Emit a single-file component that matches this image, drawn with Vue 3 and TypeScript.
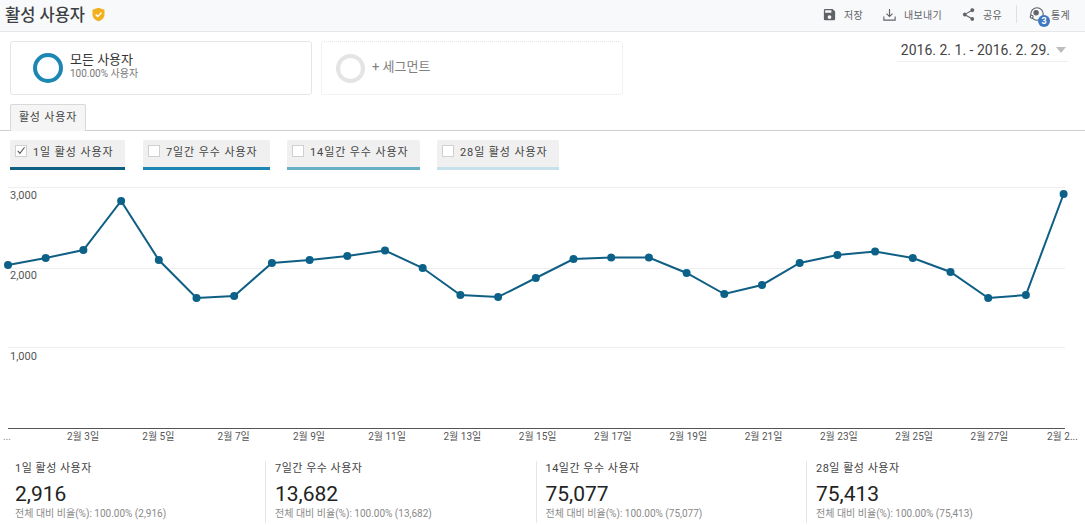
<script setup lang="ts">
const values: number[] = [265,258,250,201,260,298,296,263,260,256,250.5,268,295,297,278,259,257.5,257.5,273,294,285,263,255,251.5,258,272,298,295,194]
const points = values.map((y, i) => ({ x: 8 + i * 37.7, y: y - 187 }))
const line = points.map(p => `${p.x},${p.y}`).join(' ')
const legends = [
  { label: '1일 활성 사용자', color: '#0f5f85', checked: true, cls: 'l1' },
  { label: '7일간 우수 사용자', color: '#1c86b4', checked: false, cls: 'l2' },
  { label: '14일간 우수 사용자', color: '#68b0c8', checked: false, cls: 'l3' },
  { label: '28일 활성 사용자', color: '#c6e0ec', checked: false, cls: 'l4' },
]
const ticks = ['2월 3일','2월 5일','2월 7일','2월 9일','2월 11일','2월 13일','2월 15일','2월 17일','2월 19일','2월 21일','2월 23일','2월 25일','2월 27일']
const stats = [
  { label: '1일 활성 사용자', value: '2,916', sub: '전체 대비 비율(%): 100.00% (2,916)' },
  { label: '7일간 우수 사용자', value: '13,682', sub: '전체 대비 비율(%): 100.00% (13,682)' },
  { label: '14일간 우수 사용자', value: '75,077', sub: '전체 대비 비율(%): 100.00% (75,077)' },
  { label: '28일 활성 사용자', value: '75,413', sub: '전체 대비 비율(%): 100.00% (75,413)' },
]
</script>

<template>
  <div class="page">
    <header class="top">
      <div class="title">
        <h1>활성 사용자</h1>
        <svg class="shield" viewBox="0 0 16 16" width="15" height="15">
          <path d="M8 .8 14.4 3v4.6c0 3.8-2.7 6.3-6.4 7.6C4.300 13.900 1.600 11.400 1.600 7.600V3z" fill="#f2b01e" />
          <path d="M5 8l2.200 2.200L11.200 6" fill="none" stroke="#fff" stroke-width="1.500" />
        </svg>
      </div>
      <nav class="actions">
        <span class="act save">
          <svg viewBox="0 0 24 24" width="15" height="15"><path fill="#5f6368" d="M17 3H5a2 2 0 0 0-2 2v14a2 2 0 0 0 2 2h14a2 2 0 0 0 2-2V7zm-5 16a3 3 0 1 1 0-6 3 3 0 0 1 0 6zm3-10H5V5h10z" /></svg>
          저장
        </span>
        <span class="act exp">
          <svg viewBox="0 0 16 16" width="15" height="15" fill="none" stroke="#5f6368" stroke-width="1.200"><path d="M8 2v8M4.800 7 8 10.200 11.200 7M2 10v4h12v-4" /></svg>
          내보내기
        </span>
        <span class="act share">
          <svg viewBox="0 0 24 24" width="15" height="15"><path fill="#5f6368" d="M18 16a3 3 0 0 0-2 .8L8.900 12.700a3 3 0 0 0 0-1.400L16 7.200A3 3 0 1 0 15 5c0 .2 0 .5.100.7L8 9.800a3 3 0 1 0 0 4.400l7.100 4.100-.1.700a3 3 0 1 0 3-3z" /></svg>
          공유
        </span>
        <span class="sep"></span>
        <span class="act stat">
          <span class="insight">
            <svg viewBox="0 0 18 18" width="16" height="16" fill="none" stroke="#5f6368" stroke-width="1.300"><circle cx="9" cy="9" r="7" /><circle cx="8" cy="7.500" r="2.400" fill="#5f6368" /><circle cx="3" cy="12" r="1.600" fill="#fff" /></svg>
            <span class="badge">3</span>
          </span>
          통계
        </span>
      </nav>
    </header>

    <section class="segments">
      <div class="seg solid">
        <span class="ring blue"></span>
        <div class="seg-text">
          <div class="seg-name">모든 사용자</div>
          <div class="seg-sub">100.00% 사용자</div>
        </div>
      </div>
      <div class="seg dotted">
        <span class="ring grey"></span>
        <div class="seg-add">+ 세그먼트</div>
      </div>
      <div class="date">2016. 2. 1. - 2016. 2. 29.<i class="caret"></i></div>
    </section>

    <div class="tabs"><div class="tab">활성 사용자</div></div>

    <div class="legends">
      <div v-for="l in legends" :key="l.label" class="legend" :class="l.cls" :style="{ borderBottomColor: l.color }">
        <span class="box">
          <svg v-if="l.checked" viewBox="0 0 14 14" width="13" height="13"><path d="M2.500 7.500 5.500 11 12 2.500" fill="none" stroke="#555" stroke-width="1.500" /></svg>
        </span>
        {{ l.label }}
      </div>
    </div>

    <div class="chart">
      <svg class="plot" width="1085" height="242" viewBox="0 0 1085 242">
        <line x1="8" x2="1065" y1="0.500" y2="0.500" stroke="#eeeeee" />
        <line x1="8" x2="1065" y1="81.500" y2="81.500" stroke="#eeeeee" />
        <line x1="8" x2="1065" y1="160.500" y2="160.500" stroke="#eeeeee" />
        <line x1="8" x2="1065" y1="241.500" y2="241.500" stroke="#555555" />
        <polyline :points="line" fill="none" stroke="#0f5f85" stroke-width="2" />
        <circle v-for="(p, i) in points" :key="i" :cx="p.x" :cy="p.y" r="4" fill="#0b6188" />
      </svg>
      <span class="y y3">3,000</span>
      <span class="y y2">2,000</span>
      <span class="y y1">1,000</span>
    </div>

    <div class="ticks">
      <span class="dots">...</span>
      <span v-for="t in ticks" :key="t" class="tick">{{ t }}</span>
      <span class="tick last">2월 2...</span>
    </div>

    <section class="stats">
      <div v-for="s in stats" :key="s.label" class="stat-col">
        <div class="stat-label">{{ s.label }}</div>
        <div class="stat-value">{{ s.value }}</div>
        <div class="stat-sub">{{ s.sub }}</div>
      </div>
    </section>
  </div>
</template>

<style scoped>
.page {
  width: 1085px;
  height: 526px;
  overflow: hidden;
  background: #fff;
  color: #333;
  font-family: Roboto, "Noto Sans CJK KR", sans-serif;
}
.top {
  background: #f8f9fa;
  border-bottom: 1px solid #e6e6e6;
  display: flex;
  justify-content: space-between;
  align-items: center;
  padding: 0 15px 3px 5px;
  box-sizing: content-box;
  height: 28px;
}
.title { display: flex; align-items: center; gap: 6px; }
h1 { margin: 0; font-size: 16.500px; font-weight: 500; color: #3c4043; }
.actions { display: flex; align-items: center; font-size: 10px; letter-spacing: 0.300px; color: #5f6368; }
.act { display: flex; align-items: center; gap: 7px; }
.exp { margin-left: 19px; }
.share { margin-left: 19px; }
.sep { width: 1px; height: 18px; background: #e0e0e0; margin: 0 12px 0 14px; }
.insight { position: relative; display: flex; }
.stat { gap: 6px; }
.badge {
  position: absolute;
  right: -5px;
  bottom: -5px;
  width: 12px;
  height: 12px;
  border-radius: 50%;
  background: #3f78c2;
  color: #fff;
  font-size: 9px;
  font-weight: 700;
  letter-spacing: 0;
  line-height: 12px;
  text-align: center;
}
.segments {
  display: flex;
  align-items: flex-start;
  padding: 9px 17px 0 10px;
  height: 63px;
  box-sizing: content-box;
  gap: 9px;
}
.seg {
  width: 302px;
  height: 54px;
  box-sizing: border-box;
  border-radius: 3px;
  display: flex;
  align-items: center;
  gap: 7px;
  padding-left: 22px;
}
.solid { border: 1px solid #e6e6e6; }
.dotted { border: 1px dotted #e4e4e4; padding-left: 14px; }
.ring { width: 30px; height: 30px; box-sizing: border-box; border-radius: 50%; border: 4px solid; }
.ring.blue { border-color: #1b87b2; }
.ring.grey { border-color: #e4e4e4; width: 29px; height: 29px; }
.seg-text { margin-bottom: 4px; }
.seg-name { font-size: 13px; line-height: 16px; color: #333; }
.seg-sub { font-size: 10px; line-height: 12px; color: #777; }
.seg-add { font-size: 13px; color: #808080; margin-bottom: 6px; }
.date {
  margin-left: auto;
  margin-top: -3px;
  height: 23px;
  padding: 0 2px 0 4px;
  border-bottom: 1px solid #eeeeee;
  font-size: 14px;
  line-height: 22px;
  color: #444;
  display: flex;
  align-items: center;
}
.caret {
  margin-left: 6px;
  border-left: 5.500px solid transparent;
  border-right: 5.500px solid transparent;
  border-top: 6px solid #bdbdbd;
}
.tabs { height: 27px; box-sizing: border-box; border-bottom: 1px solid #cfcfcf; padding-left: 10px; display: flex; align-items: flex-end; }
.tab {
  width: 76px;
  height: 27px;
  box-sizing: border-box;
  border: 1px solid #d8d8d8;
  border-bottom: 0;
  border-radius: 2px 2px 0 0;
  background: #f5f5f5;
  margin-bottom: -1px;
  font-size: 11px;
  letter-spacing: 0.800px;
  line-height: 26px;
  text-align: center;
  color: #444;
}
.legends { display: flex; padding: 9px 0 0 10px; height: 31px; box-sizing: content-box; }
.legend {
  height: 30px;
  box-sizing: border-box;
  background: #f0f0f0;
  border-bottom: 3px solid;
  border-radius: 2px 2px 0 0;
  font-size: 11px;
  letter-spacing: 0.900px;
  color: #444;
  display: flex;
  align-items: center;
  padding-left: 5px;
  gap: 6px;
  padding-bottom: 6px;
}
.l1 { width: 115px; }
.l2 { width: 127px; margin-left: 18px; }
.l3 { width: 133px; margin-left: 17px; }
.l4 { width: 122px; margin-left: 17px; }
.box {
  width: 12px;
  height: 12px;
  box-sizing: border-box;
  background: #fff;
  border: 1px solid #d0d0d0;
  display: flex;
  align-items: center;
  justify-content: center;
}
.chart { position: relative; margin-top: 16px; height: 242px; }
.plot { display: block; }
.y { position: absolute; left: 10px; font-size: 11px; color: #555; line-height: 12px; }
.y3 { top: 3px; }
.y2 { top: 83px; }
.y1 { top: 164px; }
.ticks {
  position: relative;
  display: flex;
  height: 16px;
  padding-left: 67px;
  font-size: 10px;
  line-height: 16px;
  color: #555;
}
.tick { width: 75.300px; flex: none; white-space: nowrap; }
.dots { position: absolute; left: 3px; top: 0; color: #888; }
.tick.last { position: absolute; left: 1047px; width: auto; }
.stats { display: flex; margin-top: 16px; padding-left: 0; }
.stat-col {
  width: 270.500px;
  height: 62px;
  box-sizing: border-box;
  padding: 0 0 0 9px;
  border-left: 1px solid #e6e6e6;
}
.stat-col:first-child { width: 265px; border-left: 0; padding-left: 15px; }
.stat-label { font-size: 11px; line-height: 15px; letter-spacing: 0.500px; color: #444; }
.stat-value { font-size: 21px; line-height: 24px; margin-top: 6px; color: #222; }
.stat-sub { font-size: 10px; line-height: 13px; margin-top: 1px; color: #8a8a8a; }
</style>
